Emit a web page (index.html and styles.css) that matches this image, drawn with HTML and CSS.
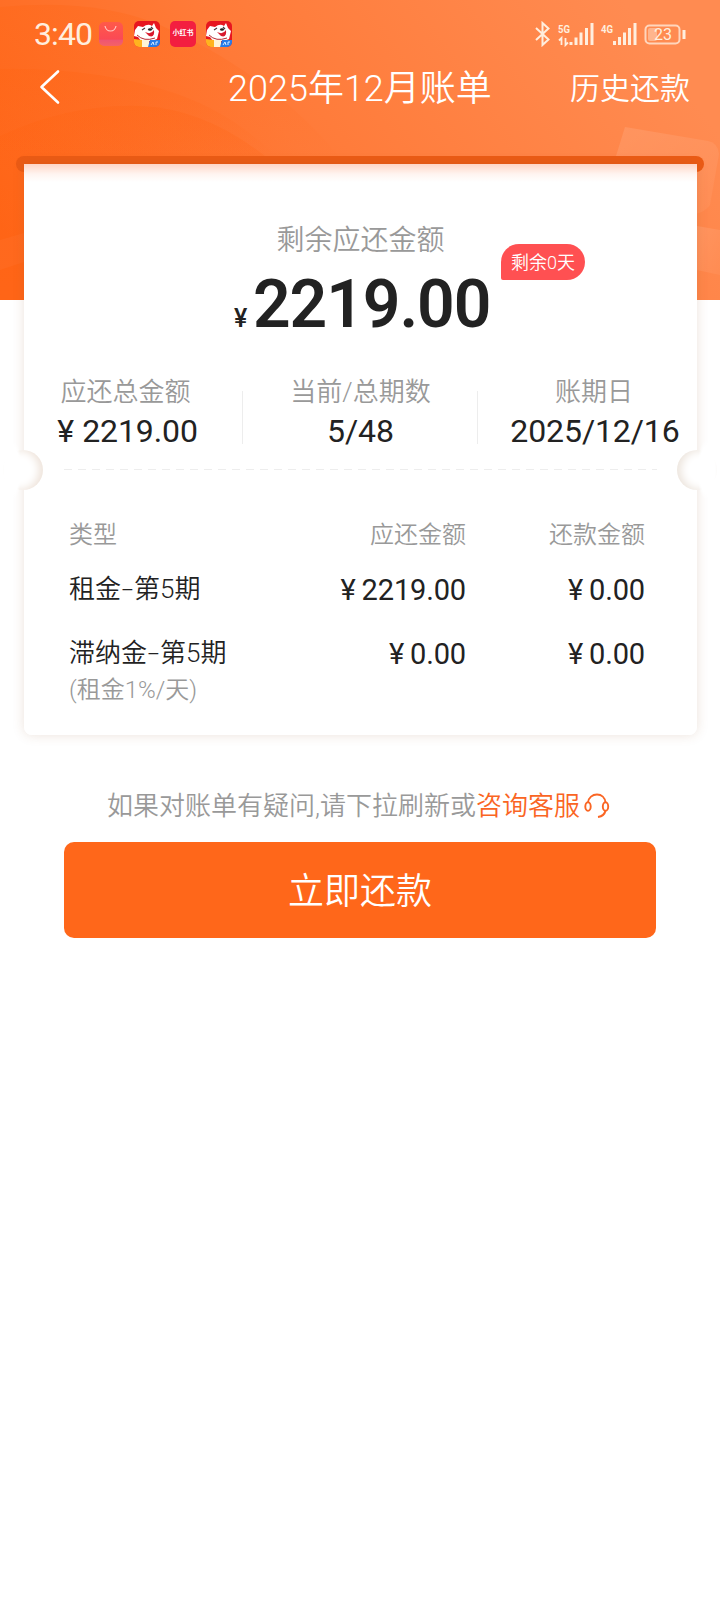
FILE: index.html
```html
<!DOCTYPE html>
<html lang="zh-CN">
<head>
<meta charset="utf-8">
<title>2025年12月账单</title>
<link rel="stylesheet" href="styles.css">
</head>
<body>
<div class="page">
  <svg class="hero" viewBox="0 0 720 300" aria-hidden="true">
    <defs>
      <linearGradient id="bg" x1="0" y1="0.75" x2="1" y2="0.45"><stop offset="0" stop-color="#ff6517"/><stop offset=".45" stop-color="#ff7a38"/><stop offset="1" stop-color="#ff8b51"/></linearGradient>
      <linearGradient id="wave" x1="0" y1="0" x2="0" y2="1"><stop offset="0" stop-color="#ff600c" stop-opacity=".22"/><stop offset="1" stop-color="#ff600c" stop-opacity="0"/></linearGradient>
      <linearGradient id="sheet" x1="0" y1="0" x2="1" y2="1"><stop offset="0" stop-color="#fff" stop-opacity=".11"/><stop offset="1" stop-color="#fff" stop-opacity=".04"/></linearGradient>
    </defs>
    <rect width="720" height="300" fill="url(#bg)"/>
    <path d="M0 7Q95-2 160 25C230 55 300 105 345 164H0Z" fill="url(#wave)"/>
    <path d="M0 69Q100 67 180 95Q235 115 275 156H0Z" fill="url(#wave)"/>
    <path d="M0 136Q70 103 142 106Q205 109 265 156V300H0Z" fill="url(#wave)"/>
    <path d="M0 240L24 233V262L0 270Z" fill="#fff" opacity=".03"/>
    <path d="M625 127L708 141Q718 143 719 154L710 205Q705 212 695 214L616 156Z" fill="url(#sheet)"/>
    <path d="M697 226L720 230V275L697 270Z" fill="url(#sheet)"/>
  </svg>

  <div class="status">
    <span class="time">3:40</span>
    <div class="apps">
      <svg width="26" height="26" viewBox="0 0 26 26"><defs><linearGradient id="bag" x1="0" y1="0" x2="0" y2="1"><stop stop-color="#ff5a49"/><stop offset=".72" stop-color="#fb4955"/><stop offset=".75" stop-color="#ee5573"/><stop offset="1" stop-color="#f56265"/></linearGradient></defs><rect x="1" y="1" width="24" height="24" rx="5" fill="url(#bag)"/><path d="M7 5Q8 10 12.500 10T18 5" fill="none" stroke="#ffc9c2" stroke-width="1.200"/></svg>
      <svg width="26" height="26" viewBox="0 0 26 26"><use href="#dog"/></svg>
      <div class="red-app">小红书</div>
      <svg width="26" height="26" viewBox="0 0 26 26"><defs><clipPath id="round"><rect width="26" height="26" rx="5"/></clipPath>
        <g id="dog" clip-path="url(#round)"><rect width="26" height="26" fill="#e71620"/><path d="M1 9L4 5L9 6Q14 2 18 5L20 2L22 7L25 10L23 18L18 20H7L4 16L0 15Z" fill="#fff"/><path d="M8 9L11 7M17 6L19 8" stroke="#4b3940" stroke-width="1.200"/><ellipse cx="16" cy="8.500" rx="2" ry="1.300" fill="#222"/><path d="M11 11Q17 14 20 9Q21 17 15 15Z" fill="#d8192d"/><path d="M3 14Q10 21 21 17" fill="none" stroke="#b72a31" stroke-width="1"/><path d="M0 18L8 19V26H0Z" fill="#ffb31f"/><path d="M8 19H15V26H8Z" fill="#fff3d6"/><path d="M16 19H26V26H14Z" fill="#287ce9"/><path d="M17 24L19 21L20 24M22 24V21H24" fill="none" stroke="#d9eeff"/></g></defs><use href="#dog"/></svg>
    </div>
    <svg class="radio" width="154" height="26" viewBox="534 21 154 26" fill="none" stroke="#ffeede">
      <path d="M536 28L548.500 39.500L542.500 45V23L548.500 28.500L536 40" stroke-width="2"/>
      <g stroke-width="3"><path d="M571 42V45M576 37.500V45M581 32.500V45M586.500 28V45M592 23V45M614.500 41V45M619.500 37V45M624.500 32.500V45M629.500 28V45M635 23V45"/></g>
      <path d="M561.500 45V38L559 40.500M565.500 38V45L568 42.500" stroke-width="1.800"/>
      <g class="net" fill="#ffeede" stroke="none"><text x="558" y="33" textLength="12" lengthAdjust="spacingAndGlyphs">5G</text><text x="601" y="33" textLength="12" lengthAdjust="spacingAndGlyphs">4G</text></g>
      <rect x="645.500" y="25.500" width="34" height="18" rx="4" stroke="#ffd6bd" stroke-width="2"/>
      <rect x="648" y="28" width="9" height="13" rx="2" fill="#ffb58d" stroke="none"/>
      <path d="M684 30V39" stroke-width="3"/>
      <text class="charge" x="654" y="40" fill="#ffeede" stroke="none" textLength="18" lengthAdjust="spacingAndGlyphs">23</text>
    </svg>
  </div>

  <div class="nav">
    <svg width="22" height="36" viewBox="0 0 22 36" fill="none" stroke="#fff" stroke-width="2.600" stroke-linecap="round" stroke-linejoin="round"><path d="M19 2.500L2.500 18L19 33.500"/></svg>
    <h1>2025年12月账单</h1>
    <span class="history">历史还款</span>
  </div>

  <div class="slot"></div>
  <main class="card">
    <div class="edge left"></div><div class="edge right"></div>
    <section class="balance">
      <div class="caption">剩余应还金额</div>
      <div class="big"><span class="yen">¥</span><span class="sum">2219.00</span></div>
      <span class="badge">剩余0天</span>
    </section>
    <section class="stats">
      <div class="stat total"><span>应还总金额</span><b><i>¥</i>2219.00</b></div>
      <div class="stat"><span>当前/总期数</span><b>5/48</b></div>
      <div class="stat due"><span>账期日</span><b>2025/12/16</b></div>
    </section>
    <div class="dash"></div>
    <section class="detail">
      <div class="row head"><span>类型</span><span>应还金额</span><span>还款金额</span></div>
      <div class="row first"><span>租金<em>-</em>第5期</span><b><i>¥</i>2219.00</b><b><i>¥</i>0.00</b></div>
      <div class="row"><span>滞纳金<em>-</em>第5期</span><b><i>¥</i>0.00</b><b><i>¥</i>0.00</b></div>
      <div class="note">(租金1%/天)</div>
    </section>
  </main>

  <div class="help"><span>如果对账单有疑问,请下拉刷新或</span><span class="link">咨询客服</span>
    <svg width="26" height="27" viewBox="0 0 26 27" fill="none" stroke="#fa6523" stroke-width="1.900"><path d="M4 9.500C4.500 4.500 8.500 1.500 13 1.500S21 4.500 21.500 9.500"/><ellipse cx="4" cy="13.500" rx="2.700" ry="4.300"/><ellipse cx="21.500" cy="13.500" rx="2.700" ry="4.300"/><path d="M21.500 17.500Q20.500 23 14 24"/></svg>
  </div>
  <button class="pay">立即还款</button>
</div>
</body>
</html>
```
FILE: styles.css
```css
* { box-sizing: border-box; }
body { margin: 0; background: #fff; }
.page { position: relative; width: 720px; height: 1600px; overflow: hidden; font-family: Roboto, "Noto Sans CJK SC", sans-serif; font-weight: 350; color: #222; isolation: isolate; }
b, i, em, h1 { font-weight: inherit; font-style: normal; }
.hero { position: absolute; z-index: -1; left: 0; top: 0; width: 720px; height: 300px; }

.status { display: flex; align-items: center; height: 68px; padding: 0 32px 0 34px; color: #ffeede; }
.time { width: 64px; font-size: 32px; line-height: 40px; letter-spacing: -.9px; font-weight: 400; white-space: nowrap; }
.apps { display: flex; gap: 10px; }
.red-app { width: 26px; height: 26px; border-radius: 5px; background: #f31e40; color: #fff; font-size: 7px; font-weight: 700; line-height: 25px; text-align: center; white-space: nowrap; }
.radio { margin-left: auto; }
.net { font: 700 11px Roboto, sans-serif; }
.charge { font: 400 16px Roboto, sans-serif; }

.nav { display: flex; align-items: center; height: 88px; padding: 0 30px 50px 39px; color: #fff; }
.nav h1 { margin: 0 0 0 167px; padding-top: 4px; font-size: 36px; line-height: 38px; white-space: nowrap; }
.history { margin-left: auto; padding-top: 3px; font-size: 30px; line-height: 38px; }

.slot { height: 16px; margin: 0 16px -8px; border-radius: 8px; background: #eb5b15; }
.card { position: relative; width: 673px; height: 571px; margin-left: 24px; border-radius: 0 0 8px 8px; background: linear-gradient(#ffd5c5, #fff4f0 10px, #fff 18px); box-shadow: 0 0 12px rgba(143, 84, 42, .17); }
.edge { position: absolute; top: 286px; width: 40px; height: 40px; border-radius: 50%; background: #fff; }
.edge::before { content: ""; position: absolute; top: -10px; width: 20px; height: 60px; background: radial-gradient(ellipse at center, #fff 55%, transparent 72%); }
.edge.left { left: -21px; box-shadow: inset -4px 0 8px #eee3da; }
.edge.right { right: -20px; box-shadow: inset 4px 0 8px #ece4dc; }
.edge.left::before { left: -1px; }
.edge.right::before { right: 0; }

.balance { position: relative; height: 210px; padding-top: 58px; }
.caption { font-size: 28px; line-height: 38px; text-align: center; color: #999; }
.big { display: flex; align-items: baseline; padding: 3px 0 0 210px; height: 84px; line-height: 84px; }
.yen { width: 19px; font-size: 25px; font-weight: 500; }
.sum { font-size: 66px; font-weight: 600; letter-spacing: -1.1px; }
.badge { position: absolute; left: 477px; top: 80px; width: 84px; height: 36px; border-radius: 18px 18px 18px 2px; background: #ff5052; color: #fff; font-size: 18px; line-height: 38px; text-align: center; }

.stats { display: grid; grid-template-columns: 219px 235px 219px; height: 95px; }
.stat { display: flex; flex-direction: column; align-items: center; background: linear-gradient(#ededed, #ededed) right 17px / 1px 53px no-repeat; white-space: nowrap; }
.stat span { font-size: 26px; line-height: 37px; color: #999; }
.stat b { font-size: 32px; line-height: 41px; font-weight: 400; letter-spacing: -.1px; }
.total { padding-right: 16px; }
.total b { margin-left: 4px; }
.stat i { display: inline-block; width: 25px; }
.stat.due { background: none; padding-left: 13px; }
.stat.due b { margin-left: 2px; }
.dash { height: 1px; margin: 0 40px; background: repeating-linear-gradient(90deg, #ededed 0 8px, transparent 8px 14px); }

.detail { padding: 46px 52px 0 45px; }
.row { display: grid; grid-template-columns: 180px 217px 179px; height: 64px; line-height: 39px; font-size: 26px; }
.row > :not(:first-child) { text-align: right; }
.row.head { height: 54px; font-size: 24px; color: #999; }
.row b { font-size: 29px; line-height: 41px; font-weight: 400; letter-spacing: -.15px; }
.row i { display: inline-block; width: 21px; text-align: left; }
.row em { display: inline-block; width: 13px; text-align: center; transform: scaleX(1.6); }
.row > span { white-space: nowrap; }
.note { margin-top: -27px; font-size: 24px; line-height: 39px; color: #999; }

.help { display: flex; align-items: center; height: 40px; margin: 48px 0 0 107px; font-size: 26px; color: #999; white-space: nowrap; }
.link { color: #fa6523; }
.help svg { margin: 6px 0 0 4px; }
.pay { display: block; width: 592px; height: 96px; margin: 19px 0 0 64px; padding: 0 0 4px; border: 0; border-radius: 10px; background: #ff671a; color: #fff; font: inherit; font-size: 36px; }
```
